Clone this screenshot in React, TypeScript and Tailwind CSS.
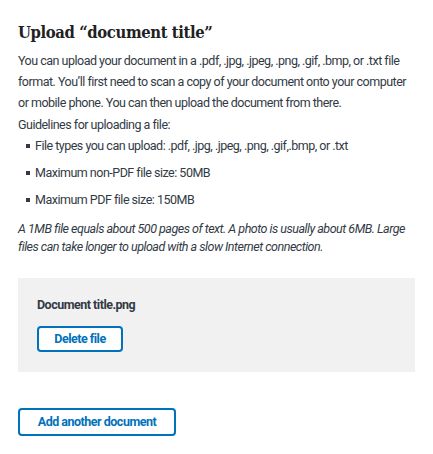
export default function App() {
  const bullets = [
    "File types you can upload: .pdf, .jpg, .jpeg, .png, .gif,.bmp, or .txt",
    "Maximum non-PDF file size: 50MB",
    "Maximum PDF file size: 150MB",
  ];

  return (
    <div
      className="bg-white w-[433px] h-[454px] px-[18px] pt-[20px] text-[#323a45] tracking-[-0.5px]"
      style={{ fontFamily: "Roboto, 'Open Sans', sans-serif" }}
    >
      <h2
        className="text-[16.5px] font-bold leading-[26px] text-[#212121] tracking-[-0.4px]"
        style={{ fontFamily: "'DejaVu Serif Condensed', 'DejaVu Serif', serif" }}
      >
        Upload “document title”
      </h2>
      <p className="mt-[4px] text-[12.5px] leading-[21px]">
        You can upload your document in a .pdf, .jpg, .jpeg, .png, .gif, .bmp, or .txt file format. You’ll first
        need to scan a copy of your document onto your computer or mobile phone. You can then upload the
        document from there.
      </p>
      <p className="mt-[1px] text-[12.5px] leading-[21px]">Guidelines for uploading a file:</p>
      <ul className="mt-0 flex flex-col gap-[6px]">
        {bullets.map((b) => (
          <li key={b} className="flex items-center text-[12.5px] leading-[21px]">
            <span className="w-[4px] h-[4px] bg-[#323a45] ml-[8px] mr-[5px]" />
            {b}
          </li>
        ))}
      </ul>
      <p className="mt-[10px] text-[12.5px] leading-[18px] italic">
        A 1MB file equals about 500 pages of text. A photo is usually about 6MB. Large files can take longer to
        upload with a slow Internet connection.
      </p>
      <div className="mt-[22px] bg-[#f1f1f1] h-[94px] px-[19px] pt-[18px]">
        <div className="text-[12.5px] font-bold leading-[18px] text-[#323a45]">Document title.png</div>
        <button className="mt-[12px] h-[26px] w-[86px] rounded-[4px] border-2 border-[#0071bb] bg-white text-[12.5px] font-bold text-[#0071bb]">
          Delete file
        </button>
      </div>
      <button className="mt-[36px] h-[28px] w-[158px] rounded-[4px] border-2 border-[#0071bb] bg-white text-[12.5px] font-bold text-[#0071bb]">
        Add another document
      </button>
    </div>
  );
}
